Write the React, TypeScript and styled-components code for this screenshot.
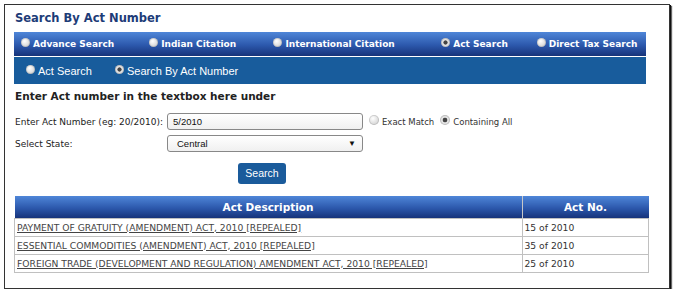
import styled, { createGlobalStyle } from "styled-components";

const GlobalStyle = createGlobalStyle`
    html, body {
        margin: 0;
        padding: 0;
        background: #ffffff;
    }
    body {
        font-family: "DejaVu Sans", Verdana, sans-serif;
        color: #333;
    }
`;

const Box = styled.div`
    margin: 4px 0 0 4px;
    width: 666px;
    height: 285px;
    border: 1px solid #333;
    box-shadow: 1px 1px 0 #111, 2px 2px 1px #666;
    background: #fff;
    padding: 0 23px 0 9px;
    box-sizing: border-box;
    display: flex;
    flex-direction: column;
`;

const Title = styled.h2`
    margin: 0;
    padding: 6px 0 0 1px;
    height: 27px;
    box-sizing: border-box;
    font-size: 11.5px;
    font-weight: bold;
    color: #1d3c78;
`;

const MainBar = styled.div`
    height: 24px;
    display: flex;
    align-items: center;
    background: linear-gradient(#4f86d8, #2c58ac 55%, #16337a);
    padding-left: 7px;
`;

const SubBar = styled.div`
    margin-top: 1px;
    height: 27px;
    display: flex;
    align-items: center;
    background: #185c9c;
    padding-left: 12px;
`;

const Option = styled.label<{ $w: number; $bold?: boolean }>`
    width: ${p => p.$w}px;
    display: flex;
    align-items: center;
    color: #fff;
    font-size: ${p => (p.$bold ? "9px" : "11px")};
    font-weight: ${p => (p.$bold ? "bold" : "normal")};
    font-family: ${p => (p.$bold ? `"DejaVu Sans", Verdana, sans-serif` : `"Liberation Sans", Arial, sans-serif`)};
    white-space: nowrap;
`;

const Radio = styled.span<{ $on?: boolean; $size?: number }>`
    display: inline-block;
    width: ${p => p.$size || 9}px;
    height: ${p => p.$size || 9}px;
    border-radius: 50%;
    margin-right: 3px;
    margin-top: -3px;
    flex-shrink: 0;
    background: ${p =>
        p.$on
            ? "radial-gradient(circle, #444 0, #444 28%, #e8e8e8 38%, #c8c8c8 100%)"
            : "radial-gradient(circle at 40% 35%, #ffffff, #d6d6d6 70%, #b8b8b8)"};
    box-shadow: inset 0 0 0 1px rgba(0, 0, 0, 0.12);
`;

const SubTitle = styled.div`
    margin-top: 6px;
    padding-left: 1px;
    font-size: 10.5px;
    font-weight: bold;
    color: #222;
    height: 18px;
`;

const FormRow = styled.div<{ $top: number }>`
    margin-top: ${p => p.$top}px;
    display: flex;
    align-items: center;
    padding-left: 1px;
    height: 17px;
`;

const FieldLabel = styled.span`
    width: 152px;
    font-size: 9px;
    color: #222;
    white-space: nowrap;
`;

const TextInput = styled.div`
    width: 196px;
    height: 17px;
    box-sizing: border-box;
    border: 1px solid #888;
    border-radius: 3px;
    background: linear-gradient(#ffffff, #f0f0f0);
    font-family: "Liberation Sans", Arial, sans-serif;
    font-size: 9.5px;
    color: #111;
    display: flex;
    align-items: center;
    padding-left: 5px;
`;

const SelectBox = styled(TextInput)`
    justify-content: space-between;
    padding: 0 6px 0 9px;
`;

const Arrow = styled.span`
    font-size: 8px;
    color: #111;
`;

const MatchOption = styled.span`
    display: flex;
    align-items: center;
    font-size: 8.5px;
    color: #333;
    margin-left: 6px;
    white-space: nowrap;
`;

const ButtonRow = styled.div`
    margin-top: 10px;
    padding-left: 224px;
`;

const Button = styled.button`
    width: 48px;
    height: 21px;
    border: none;
    border-radius: 3px;
    background: #1a5b9b;
    color: #fff;
    font-family: "Liberation Sans", Arial, sans-serif;
    font-size: 10.5px;
    padding: 0;
`;

const Table = styled.table`
    margin-top: 12px;
    width: 635px;
    border-collapse: collapse;
    font-size: 9.2px;
`;

const Th = styled.th`
    height: 22px;
    padding: 0;
    color: #fff;
    font-size: 10.5px;
    font-weight: bold;
    background: linear-gradient(#4f86d8, #2c58ac 55%, #16337a);
    border-right: 1px solid #c8c8c8;
    &:last-child {
        border-right: none;
    }
`;

const Td = styled.td`
    height: 17px;
    padding: 0 2px;
    border: 1px solid #c0c0c0;
    color: #333;
    white-space: nowrap;
`;

const ActLink = styled.a`
    color: #444;
    text-decoration: underline;
`;

const acts = [
    { desc: "PAYMENT OF GRATUITY (AMENDMENT) ACT, 2010 [REPEALED]", no: "15 of 2010" },
    { desc: "ESSENTIAL COMMODITIES (AMENDMENT) ACT, 2010 [REPEALED]", no: "35 of 2010" },
    { desc: "FOREIGN TRADE (DEVELOPMENT AND REGULATION) AMENDMENT ACT, 2010 [REPEALED]", no: "25 of 2010" },
];

const mainTabs = [
    { label: "Advance Search", w: 129 },
    { label: "Indian Citation", w: 125 },
    { label: "International Citation", w: 169 },
    { label: "Act Search", w: 96, on: true },
    { label: "Direct Tax Search", w: 110 },
];

function App() {
    return (
        <>
            <GlobalStyle />
            <Box>
                <Title>Search By Act Number</Title>
                <MainBar>
                    {mainTabs.map(t => (
                        <Option key={t.label} $w={t.w} $bold>
                            <Radio $on={t.on} />
                            {t.label}
                        </Option>
                    ))}
                </MainBar>
                <SubBar>
                    <Option $w={89}>
                        <Radio />
                        Act Search
                    </Option>
                    <Option $w={140}>
                        <Radio $on />
                        Search By Act Number
                    </Option>
                </SubBar>
                <SubTitle>Enter Act number in the textbox here under</SubTitle>
                <FormRow $top={5}>
                    <FieldLabel>Enter Act Number (eg: 20/2010):</FieldLabel>
                    <TextInput>5/2010</TextInput>
                    <MatchOption>
                        <Radio $size={10} />
                        Exact Match
                    </MatchOption>
                    <MatchOption>
                        <Radio $size={10} $on />
                        Containing All
                    </MatchOption>
                </FormRow>
                <FormRow $top={5}>
                    <FieldLabel>Select State:</FieldLabel>
                    <SelectBox>
                        Central
                        <Arrow>▼</Arrow>
                    </SelectBox>
                </FormRow>
                <ButtonRow>
                    <Button>Search</Button>
                </ButtonRow>
                <Table>
                    <thead>
                        <tr>
                            <Th>Act Description</Th>
                            <Th style={{ width: 126 }}>Act No.</Th>
                        </tr>
                    </thead>
                    <tbody>
                        {acts.map(a => (
                            <tr key={a.no}>
                                <Td>
                                    <ActLink>{a.desc}</ActLink>
                                </Td>
                                <Td>{a.no}</Td>
                            </tr>
                        ))}
                    </tbody>
                </Table>
            </Box>
        </>
    );
}

export default App;
